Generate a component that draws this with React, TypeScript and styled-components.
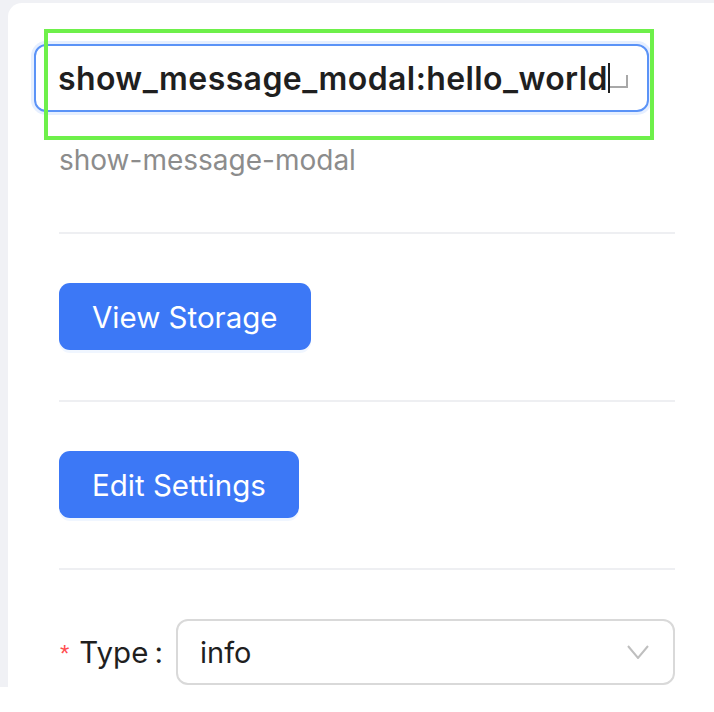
import React from "react";
import styled, { createGlobalStyle } from "styled-components";

const Global = createGlobalStyle`
  html, body { margin: 0; padding: 0; background: #ffffff; }
  * { box-sizing: border-box; }
`;

const Page = styled.div`
  height: 687px;
  background: #f0f1f5;
  padding: 3px 0 0 8px;
  overflow: hidden;
  font-family: Inter, "Liberation Sans", sans-serif;
`;

const Card = styled.div`
  position: relative;
  height: 100%;
  background: #ffffff;
  border-top-left-radius: 14px;
  padding: 41px 39px 0 51px;
`;

const TitleInput = styled.div`
  display: flex;
  align-items: center;
  width: 615px;
  height: 68px;
  margin-left: -25px;
  padding-left: 22px;
  border: 2px solid #5b93f7;
  border-radius: 12px;
  box-shadow: 0 0 0 3px #e6efff;
  font-size: 32px;
  font-weight: 600;
  color: #1f1f1f;
  letter-spacing: 0.4px;
`;

const Caret = styled.span`
  display: inline-block;
  width: 2px;
  height: 30px;
  background: #1f1f1f;
`;

const ReturnMark = styled.span`
  display: inline-block;
  width: 18px;
  height: 13px;
  border: 2px solid #a8a8a8;
  border-top: none;
  border-left: none;
  margin-top: 6px;
`;

const Hint = styled.div`
  margin-top: 28px;
  font-size: 28px;
  line-height: 40px;
  color: #8c8c8c;
`;

const FirstDivider = styled.div`
  margin-top: 52px;
`;

const Section = styled.div`
  border-top: 2px solid #eeeff2;
  padding: 49px 0 50px;
`;

const PrimaryButton = styled.button<{ $px?: number }>`
  display: inline-flex;
  align-items: center;
  justify-content: center;
  height: 67px;
  padding: 0 ${(p) => p.$px ?? 33}px;
  border: none;
  border-radius: 11px;
  background: #3c78f6;
  color: #ffffff;
  font-family: Inter, "Liberation Sans", sans-serif;
  font-size: 29.5px;
  font-weight: 400;
  box-shadow: 0 3px 0 rgba(5, 105, 255, 0.06);
`;

const FieldRow = styled.div`
  display: flex;
  align-items: center;
  border-top: 2px solid #eeeff2;
  padding-top: 49px;
`;

const Label = styled.label`
  display: flex;
  align-items: center;
  width: 117px;
  font-size: 29.5px;
  color: #1f1f1f;
`;

const Required = styled.span`
  color: #ff4d4f;
  font-size: 24px;
  margin: 4px 10px 0 1px;
  font-family: "Liberation Sans", sans-serif;
`;

const Colon = styled.span`
  margin-left: 6px;
`;

const Select = styled.div`
  flex: 1;
  display: flex;
  align-items: center;
  justify-content: space-between;
  height: 66px;
  border: 2px solid #d9d9d9;
  border-radius: 12px;
  padding: 0 24px 0 22px;
  font-size: 29px;
  color: #1f1f1f;
`;

const Overlay = styled.div`
  position: absolute;
  left: 36px;
  top: 26px;
  width: 610px;
  height: 111px;
  border: 4px solid #6ef04a;
  pointer-events: none;
`;

export default function App() {
  return (
    <>
      <Global />
      <Page>
        <Card>
          <TitleInput>
            <span>show_message_modal:hello_world</span>
            <Caret />
            <ReturnMark />
          </TitleInput>
          <Hint>show-message-modal</Hint>
          <FirstDivider />
          <Section>
            <PrimaryButton $px={33}>View Storage</PrimaryButton>
          </Section>
          <Section>
            <PrimaryButton $px={33}>Edit Settings</PrimaryButton>
          </Section>
          <FieldRow>
            <Label>
              <Required>*</Required>
              Type<Colon>:</Colon>
            </Label>
            <Select>
              <span>info</span>
              <svg width="22" height="14" viewBox="0 0 22 14">
                <polyline points="1,1 11,13 21,1" fill="none" stroke="#bfbfbf" strokeWidth="2" />
              </svg>
            </Select>
          </FieldRow>
          <Overlay />
        </Card>
      </Page>
    </>
  );
}
